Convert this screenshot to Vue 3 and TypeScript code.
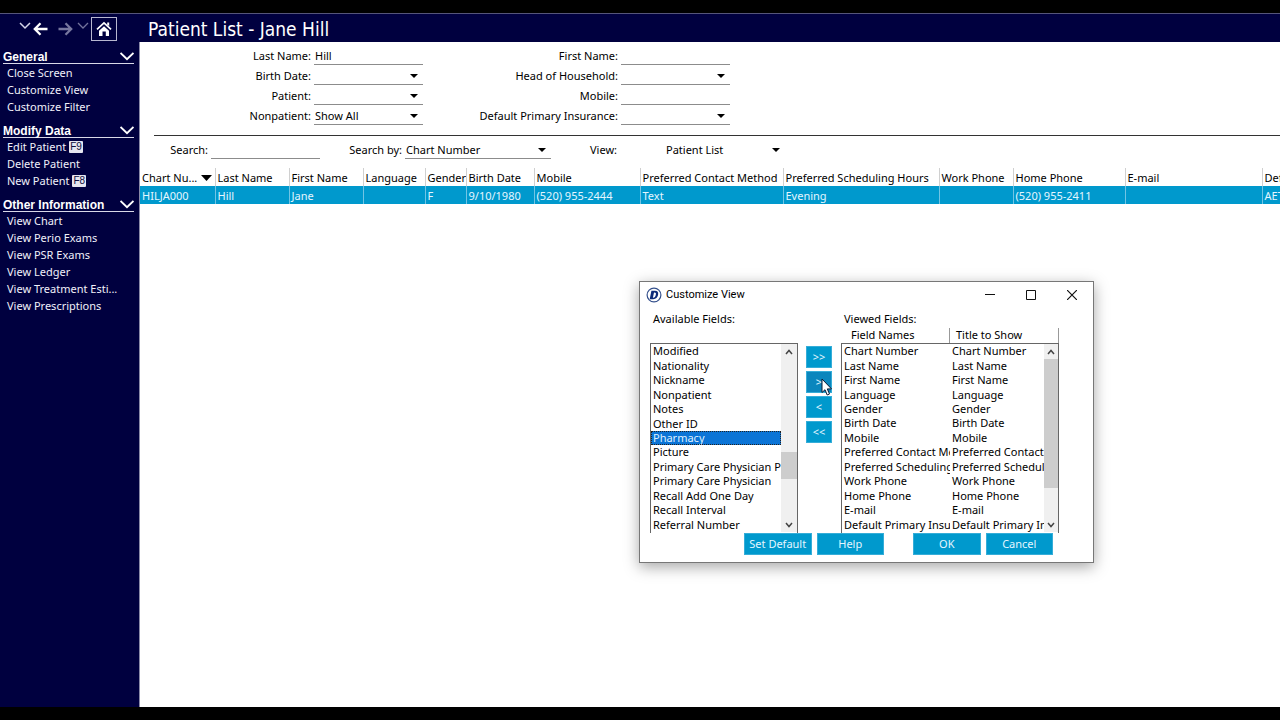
<script setup lang="ts">
import { ref } from 'vue'

interface MenuItem { label: string; key?: string }
interface MenuSection { title: string; items: MenuItem[] }
interface Column { title: string; value: string; cls: string }

const sections: MenuSection[] = [
  { title: 'General', items: [{ label: 'Close Screen' }, { label: 'Customize View' }, { label: 'Customize Filter' }] },
  { title: 'Modify Data', items: [{ label: 'Edit Patient', key: 'F9' }, { label: 'Delete Patient' }, { label: 'New Patient', key: 'F8' }] },
  {
    title: 'Other Information',
    items: [
      { label: 'View Chart' }, { label: 'View Perio Exams' }, { label: 'View PSR Exams' },
      { label: 'View Ledger' }, { label: 'View Treatment Esti...' }, { label: 'View Prescriptions' },
    ],
  },
]

const columns: Column[] = [
  { title: 'Chart Nu...', value: 'HILJA000', cls: 'c-chart' },
  { title: 'Last Name', value: 'Hill', cls: 'c-name' },
  { title: 'First Name', value: 'Jane', cls: 'c-name' },
  { title: 'Language', value: '', cls: 'c-lang' },
  { title: 'Gender', value: 'F', cls: 'c-gender' },
  { title: 'Birth Date', value: '9/10/1980', cls: 'c-birth' },
  { title: 'Mobile', value: '(520) 955-2444', cls: 'c-mobile' },
  { title: 'Preferred Contact Method', value: 'Text', cls: 'c-contact' },
  { title: 'Preferred Scheduling Hours', value: 'Evening', cls: 'c-hours' },
  { title: 'Work Phone', value: '', cls: 'c-work' },
  { title: 'Home Phone', value: '(520) 955-2411', cls: 'c-home' },
  { title: 'E-mail', value: '', cls: 'c-email' },
  { title: 'Default Primary Insurance', value: 'AET', cls: 'c-ins' },
]

const available: string[] = [
  'Modified', 'Nationality', 'Nickname', 'Nonpatient', 'Notes', 'Other ID', 'Pharmacy', 'Picture',
  'Primary Care Physician P', 'Primary Care Physician', 'Recall Add One Day', 'Recall Interval', 'Referral Number',
]
const viewed: string[] = [
  'Chart Number', 'Last Name', 'First Name', 'Language', 'Gender', 'Birth Date', 'Mobile',
  'Preferred Contact Method', 'Preferred Scheduling Hours', 'Work Phone', 'Home Phone', 'E-mail',
  'Default Primary Insurance',
]
const selected = ref('Pharmacy')
const lastName = ref('Hill')
</script>

<template>
  <div class="screen">
    <header class="topbar">
      <nav class="nav" aria-label="History">
        <button class="icon-btn" aria-label="Back history">
          <svg width="12" height="18" viewBox="0 0 12 18"><path d="M1 3l5 5 5-5" fill="none" stroke="#d5d5ea" stroke-width="1.5" /></svg>
        </button>
        <button class="icon-btn back" aria-label="Back">
          <svg width="15" height="14" viewBox="0 0 15 14"><path d="M14.500 7H2M7.500 1.300L1.800 7l5.700 5.700" fill="none" stroke="#fff" stroke-width="2.300" /></svg>
        </button>
        <button class="icon-btn fwd" aria-label="Forward">
          <svg width="15" height="14" viewBox="0 0 15 14"><path d="M.5 7H13M7.500 1.300L13.200 7l-5.700 5.700" fill="none" stroke="#77779f" stroke-width="2.300" /></svg>
        </button>
        <button class="icon-btn fwd-menu" aria-label="Forward history">
          <svg width="12" height="18" viewBox="0 0 12 18"><path d="M1 3l5 5 5-5" fill="none" stroke="#73739c" stroke-width="1.300" /></svg>
        </button>
        <button class="home" aria-label="Home">
          <svg width="16" height="16" viewBox="0 0 16 16">
            <path d="M1 8.300L8 1.800l7 6.500" fill="none" stroke="#fff" stroke-width="1.700" />
            <path d="M11.200 1.500h2v3.700l-2-1.900z" fill="#fff" />
            <path d="M3 9.800l5-4.600 5 4.600V15H9.800v-4.500H6.500V15H3z" fill="#fff" />
          </svg>
        </button>
      </nav>
      <h1>Patient List - Jane Hill</h1>
    </header>

    <div class="body">
      <aside class="sidebar">
        <section v-for="s in sections" :key="s.title">
          <h2>
            <span>{{ s.title }}</span>
            <svg width="14" height="9" viewBox="0 0 14 9"><path d="M.5 1l6.500 6.300L13.500 1" fill="none" stroke="#fff" stroke-width="1.900" /></svg>
          </h2>
          <ul>
            <li v-for="i in s.items" :key="i.label">
              <a href="#">{{ i.label }}</a><kbd v-if="i.key">{{ i.key }}</kbd>
            </li>
          </ul>
        </section>
      </aside>

      <main class="main">
        <form class="filters" @submit.prevent>
          <label for="ln">Last Name:</label>
          <span class="field"><input id="ln" v-model="lastName" type="text"></span>
          <label for="fn">First Name:</label>
          <span class="field"><input id="fn" type="text"></span>
          <label for="bd">Birth Date:</label>
          <span class="field drop"><select id="bd"><option></option></select></span>
          <label for="hh">Head of Household:</label>
          <span class="field drop"><select id="hh"><option></option></select></span>
          <label for="pt">Patient:</label>
          <span class="field drop"><select id="pt"><option></option></select></span>
          <label for="mb">Mobile:</label>
          <span class="field"><input id="mb" type="text"></span>
          <label for="np">Nonpatient:</label>
          <span class="field drop"><select id="np"><option>Show All</option></select></span>
          <label for="di">Default Primary Insurance:</label>
          <span class="field drop"><select id="di"><option></option></select></span>
        </form>

        <form class="search" @submit.prevent>
          <label for="se">Search:</label>
          <span class="field"><input id="se" type="text"></span>
          <label for="sb">Search by:</label>
          <span class="field drop"><select id="sb"><option>Chart Number</option></select></span>
          <label for="vw">View:</label>
          <span class="field drop plain"><select id="vw"><option>Patient List</option></select></span>
        </form>

        <div class="grid-wrap">
          <table class="patients">
            <colgroup><col v-for="c in columns" :key="c.title" :class="c.cls"></colgroup>
            <thead>
              <tr>
                <th v-for="(c, n) in columns" :key="c.title" scope="col">
                  {{ c.title }}<svg v-if="n === 0" width="11" height="6" viewBox="0 0 11 6"><path d="M0 0h11L5.500 6z" /></svg>
                </th>
              </tr>
            </thead>
            <tbody>
              <tr><td v-for="c in columns" :key="c.title">{{ c.value }}</td></tr>
            </tbody>
          </table>
        </div>
      </main>
    </div>

    <div class="dialog" role="dialog" aria-labelledby="dlg-title">
      <div class="titlebar">
        <svg class="logo" width="16" height="16" viewBox="0 0 16 16">
          <circle cx="8" cy="8" r="6.900" fill="#fff" stroke="#34508c" stroke-width="1.200" />
          <path d="M5.400 3.800h3.500c2.600 0 3.700 1.500 3.200 4-.5 2.700-2.200 4.400-4.900 4.400H3.700zM8 5.400L6.900 10.700c1.600.1 2.500-.9 2.900-2.900.4-1.700 0-2.500-1.800-2.400z" fill="#0c2a78" fill-rule="evenodd" />
        </svg>
        <h2 id="dlg-title">Customize View</h2>
        <button aria-label="Minimize"><svg width="10" height="10" viewBox="0 0 10 10"><path d="M0 4.500h10" stroke="#111" /></svg></button>
        <button aria-label="Maximize"><svg width="10" height="10" viewBox="0 0 10 10"><path d="M.5.5h9v9h-9z" fill="none" stroke="#111" /></svg></button>
        <button aria-label="Close"><svg width="10" height="10" viewBox="0 0 10 10"><path d="M0 0l10 10M10 0L0 10" fill="none" stroke="#111" stroke-width="1.200" /></svg></button>
      </div>

      <div class="panes">
        <div class="pane left">
          <div id="av-label" class="caption">Available Fields:</div>
          <div class="heads"></div>
          <div class="box">
            <ul class="options" role="listbox" aria-labelledby="av-label">
              <li
                v-for="f in available" :key="f" role="option" :aria-selected="selected === f"
                :class="{ on: selected === f }" @click="selected = f"
              >{{ f }}</li>
            </ul>
            <div class="bar">
              <svg class="cap" width="8" height="6" viewBox="0 0 8 6"><path d="M1 5l3-3.500L7 5" /></svg>
              <i class="before"></i><i class="thumb"></i><i class="after"></i>
              <svg class="cap" width="8" height="6" viewBox="0 0 8 6"><path d="M1 1l3 3.500L7 1" /></svg>
            </div>
          </div>
        </div>

        <div class="movers">
          <button aria-label="Add all">&gt;&gt;</button>
          <button class="hover" aria-label="Add">&gt;
            <svg class="cursor" width="12" height="19" viewBox="0 0 12 19">
              <path d="M1 1v13.500l3-2.800 2.200 5.300 2.300-1-2.200-5.100h4.200z" fill="#fff" stroke="#0b1a33" />
            </svg>
          </button>
          <button aria-label="Remove">&lt;</button>
          <button aria-label="Remove all">&lt;&lt;</button>
        </div>

        <div class="pane right">
          <div id="vf-label" class="caption">Viewed Fields:</div>
          <div class="heads"><span>Field Names</span><span>Title to Show</span></div>
          <div class="box">
            <table class="viewed" aria-labelledby="vf-label">
              <tbody>
                <tr v-for="f in viewed" :key="f"><td>{{ f }}</td><td>{{ f }}</td></tr>
              </tbody>
            </table>
            <div class="bar">
              <svg class="cap" width="8" height="6" viewBox="0 0 8 6"><path d="M1 5l3-3.500L7 5" /></svg>
              <i class="before"></i><i class="thumb"></i><i class="after"></i>
              <svg class="cap" width="8" height="6" viewBox="0 0 8 6"><path d="M1 1l3 3.500L7 1" /></svg>
            </div>
          </div>
        </div>
      </div>

      <div class="actions">
        <button>Set Default</button>
        <button>Help</button>
        <button class="ok">OK</button>
        <button>Cancel</button>
      </div>
    </div>
  </div>
</template>

<style>
body { background: #000; }
</style>

<style scoped>
* { box-sizing: border-box; }
.screen {
  position: relative;
  display: flex;
  flex-direction: column;
  min-height: 100vh;
  padding: 13px 0;
  overflow: hidden;
  background: #000;
  color: #000;
  font-family: Tahoma, "Noto Sans", sans-serif;
  font-size: 11px;
  line-height: 18px;
}
h1, h2, ul { margin: 0; padding: 0; font-weight: 400; }
ul { list-style: none; }
button, input, select { font: inherit; color: inherit; margin: 0; }
button { padding: 0; border: 0; background: none; }
svg { display: block; flex: none; }

.topbar {
  display: flex;
  align-items: center;
  height: 29px;
  border-top: 1px solid #55557a;
  background: #00003f;
  color: #fff;
}
.nav { display: flex; align-items: center; width: 140px; padding: 2px 0 0 19px; }
.icon-btn.back { margin-left: 2px; }
.icon-btn.fwd { margin-left: 10px; }
.icon-btn.fwd-menu { margin-left: 4px; }
.home {
  display: flex;
  align-items: center;
  justify-content: center;
  width: 26px;
  height: 24px;
  margin-left: 2px;
  border: 1px solid #b8b8d0;
}
h1 { padding: 2px 0 0 8px; font-family: Tahoma, "DejaVu Sans Condensed", sans-serif; font-size: 19px; line-height: 26px; }

.body { display: flex; flex: 1; background: #fff; }
.sidebar {
  flex: none;
  width: 140px;
  padding: 7px 5px 0 3px;
  border-right: 1px solid #8a8aa8;
  background: #00003f;
  color: #f0f0fa;
}
.sidebar section { margin-bottom: 8px; }
.sidebar h2 {
  display: flex;
  justify-content: space-between;
  align-items: center;
  height: 15px;
  padding-top: 1px;
  border-bottom: 1px solid #d8d8e8;
  color: #fff;
  font-family: "Liberation Sans", Arial, sans-serif;
  font-size: 12px;
  font-weight: 700;
}
.sidebar li { display: flex; align-items: center; height: 17px; padding-left: 4px; line-height: 17px; white-space: nowrap; }
.sidebar a { color: inherit; text-decoration: none; }
kbd {
  height: 12px;
  margin-left: 3px;
  padding: 0 1px;
  border-radius: 1px;
  background: #e6e6f0;
  color: #10103c;
  font-family: "Liberation Sans", Arial, sans-serif;
  font-size: 10px;
  line-height: 12px;
}

.main { flex: 1; min-width: 0; }
label { text-align: right; white-space: nowrap; }
.field { position: relative; display: block; height: 18px; border-bottom: 1px solid #8c8c8c; }
.field input, .field select {
  display: block;
  width: 100%;
  height: 17px;
  padding: 0 1px;
  border: 0;
  outline: 0;
  border-radius: 0;
  background: none;
  appearance: none;
  line-height: 17px;
}
.drop::after {
  content: "";
  position: absolute;
  top: 7px;
  right: 5px;
  border: 4px solid transparent;
  border-top-color: #000;
  border-bottom: 0;
  pointer-events: none;
}
.filters {
  display: grid;
  grid-template-columns: 157px 109px 192px 109px;
  grid-auto-rows: 20px;
  column-gap: 3px;
  margin: 0 0 0 14px;
  padding: 5px 0 8px;
  border-bottom: 1px solid #333;
}
.search {
  display: grid;
  grid-template-columns: 68px 109px 79px 146px 63px 165px;
  column-gap: 3px;
  height: 32px;
  padding-top: 5px;
}
.plain { border-bottom-color: transparent; }
.plain select { padding-left: 46px; }

.grid-wrap { overflow: hidden; }
.patients { width: 1280px; table-layout: fixed; border-collapse: collapse; }
.patients th, .patients td {
  height: 18px;
  padding: 1px 0 0 2px;
  border-left: 1px solid #d0d0d0;
  overflow: hidden;
  line-height: 17px;
  font-weight: 400;
  text-align: left;
  white-space: nowrap;
}
.patients th:first-child, .patients td:first-child { border-left: 0; }
.patients th svg { display: inline-block; margin-left: 4px; vertical-align: 1px; }
.patients tbody { background: #0099cd; color: #e4f6ff; }
.patients td { padding-top: 2px; border-left-color: #72c4e4; line-height: 16px; }
.c-chart { width: 75px; }
.c-name { width: 74px; }
.c-lang { width: 62px; }
.c-gender { width: 41px; }
.c-birth { width: 68px; }
.c-mobile { width: 106px; }
.c-contact { width: 143px; }
.c-hours { width: 156px; }
.c-work { width: 74px; }
.c-home { width: 112px; }
.c-email { width: 137px; }

.dialog {
  position: absolute;
  top: 281px;
  left: 639px;
  width: 455px;
  border: 1px solid #777;
  background: #fff;
  box-shadow: 0 4px 14px rgba(0, 0, 0, .35);
}
.titlebar { display: flex; align-items: center; height: 26px; padding: 0 1px 0 6px; }
.titlebar h2 { flex: 1; padding-left: 4px; font-family: "Segoe UI", Roboto, sans-serif; font-size: 11px; }
.titlebar button { display: flex; align-items: center; justify-content: center; width: 41px; height: 24px; }
.panes { display: flex; padding: 3px 0 0 10px; }
.left { width: 148px; }
.movers { display: flex; flex-direction: column; gap: 3px; width: 26px; margin: 35px 9px 0 8px; }
.right { width: 218px; }
.caption { height: 17px; padding-left: 3px; line-height: 16px; }
.heads { display: flex; height: 15px; line-height: 14px; }
.heads span { width: 109px; padding-left: 6px; border-right: 1px solid #999; }
.heads span:first-child { padding-left: 10px; }
.box { display: flex; height: 190px; border: 1px solid #666; border-bottom: 0; }
.options { display: grid; grid-auto-rows: 1fr; flex: 1; min-width: 0; height: 188px; }
.options li {
  display: flex;
  align-items: center;
  min-height: 0;
  padding-left: 2px;
  overflow: hidden;
  line-height: 14px;
  white-space: nowrap;
}
.options .on { background: #0b74d6; color: #dff0ff; outline: 1px dotted #222; outline-offset: -1px; }
.viewed { flex: 1; width: 100%; height: 188px; table-layout: fixed; border-collapse: collapse; }
.viewed td { padding: 0; padding-left: 2px; overflow: hidden; line-height: 14px; white-space: nowrap; }
.viewed td:first-child { width: 108px; }
.bar { display: flex; flex-direction: column; flex: none; width: 16px; height: 188px; background: #f0f0f0; }
.right .bar { width: 14px; }
.cap { margin: 5px auto 4px; fill: none; stroke: #444; stroke-width: 1.500px; }
.thumb { background: #cdcdcd; }
.left .before { flex: 93; }
.left .thumb { flex: 27; }
.left .after { flex: 38; }
.right .before { flex: 0; }
.right .thumb { flex: 129; }
.right .after { flex: 29; }

.movers button, .actions button {
  height: 22px;
  border: 1px solid #35add8;
  background: #0099cd;
  color: #e4f6ff;
  line-height: 20px;
}
.movers .hover { position: relative; background: #0a86bd; }
.cursor { position: absolute; top: 6px; left: 14px; z-index: 1; }
.actions { display: flex; gap: 5px; padding: 0 40px 7px 104px; }
.actions button { width: 68px; }
.actions .ok { margin-left: 24px; }
</style>
